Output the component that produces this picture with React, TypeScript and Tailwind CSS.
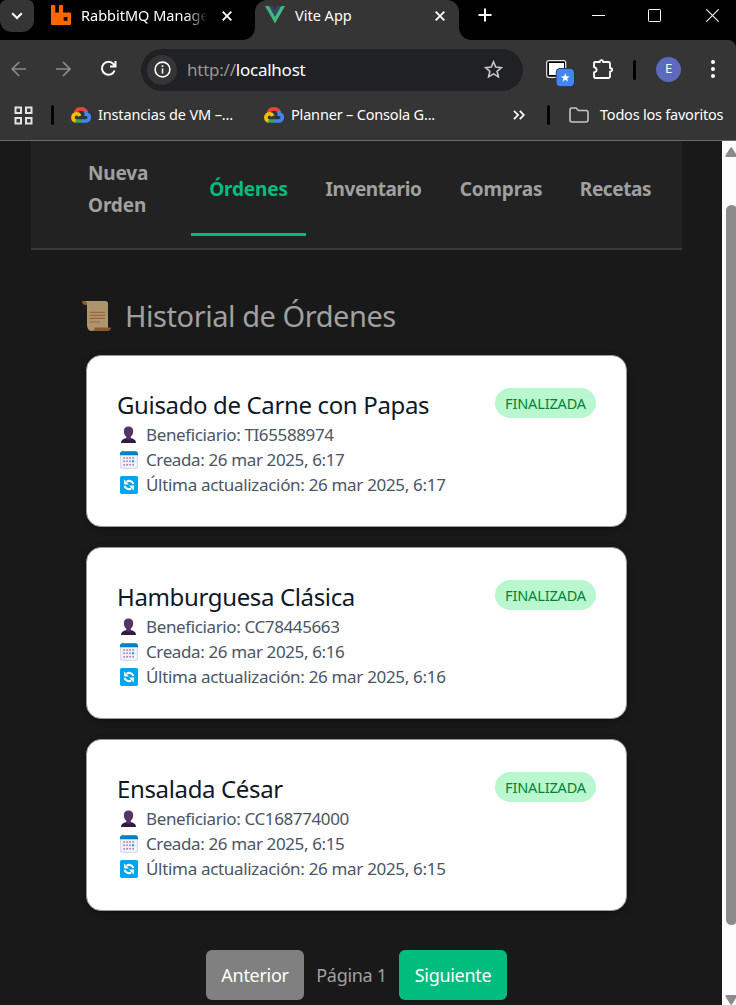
import React from 'react';

const CloudLogo = () => (
  <svg width="20" height="17" viewBox="0 0 20 17" fill="none" strokeWidth="3.6" className="shrink-0">
    <path d="M4.2 6.2C5.2 3.4 7.4 1.9 10 1.9c2.400 0 4.300 1.200 5.300 3.300" stroke="#ea4335" />
    <path d="M14.400 4.200c.8 1 .9 1.900.9 3 1.900.1 3 1.400 3 3.300 0 2-1.500 3.500-3.500 3.500H10" stroke="#4285f4" />
    <path d="M10.300 14H5.500c-.8 0-1.500-.2-2.100-.6" stroke="#34a853" />
    <path d="M4.400 14.100C2.700 13.300 1.900 12.200 1.900 10.400c0-2.100 1.500-3.700 3.600-3.700 1.700 0 2.700.8 3.300 2.300" stroke="#fbbc05" />
  </svg>
);

const Person = () => (
  <svg width="18" height="18" viewBox="0 0 18 18" className="shrink-0">
    <path d="M1 17c0-3 2-4.300 5-4.800h5c3 .5 5 1.800 5 4.800z" fill="#321b41" />
    <path d="M6.300 10h4.400v3c-1 1.300-3.400 1.300-4.400 0z" fill="#4b2d5e" />
    <path d="M8.500.6c3 0 4.700 1.800 4.700 4.500 0 3.200-1.900 6.600-4.700 6.600S3.800 8.300 3.800 5.100C3.800 2.400 5.500.6 8.500.6z" fill="#533566" />
  </svg>
);

const Calendar = () => (
  <svg width="18" height="18" viewBox="0 0 18 18" className="shrink-0">
    <rect x=".4" y=".4" width="17.200" height="17.200" rx="2.500" fill="#f3eef8" stroke="#d3c9da" strokeWidth=".8" />
    <path d="M0 4.200V2.800A2.600 2.600 0 0 1 2.600.2h12.800A2.600 2.600 0 0 1 18 2.800v1.400z" fill="#0082c8" />
    <g fill="#93869f">
      <path d="M6.300 6.200h1.600v1.600H6.300zM9.300 6.200h1.600v1.600H9.300zM12.300 6.200h1.600v1.600h-1.600zM3.300 9.500h1.600v1.600H3.300zM6.300 9.500h1.600v1.600H6.300zM9.300 9.500h1.600v1.600H9.300zM3.300 12.900h1.600v1.600H3.300zM6.300 12.900h1.600v1.600H6.300zM9.300 12.900h1.600v1.600H9.300zM12.300 12.900h1.600v1.600h-1.600z" />
      <path d="M3.300 6.200h1.600v1.600H3.300z" />
    </g>
    <path d="M12.100 9.300H14v2h-1.900z" fill="#0094e0" />
  </svg>
);

const Refresh = () => (
  <svg width="18" height="18" viewBox="0 0 18 18" className="shrink-0">
    <rect width="18" height="18" rx="1.800" fill="#00a6ed" />
    <path d="M13.300 8.200C12.900 5.200 9.300 3.900 6.700 5.700M4.700 9.800c.4 3 4 4.300 6.600 2.500" fill="none" stroke="#fff" strokeWidth="2.100" />
    <path d="M4 3.400v5h5zM14 14.600v-5H9z" fill="#fff" />
  </svg>
);

const Scroll = () => (
  <svg width="31" height="32" viewBox="0 0 31 32" className="shrink-0">
    <path d="M1 1h6v4H4.500C2.500 5 1 3.400 1 1z" fill="#8f5a2b" />
    <path d="M4 1h20.500C26 1 27 2 27 3.500V28H10c-2.500 0-4-1.500-4-4V4.500C6 2.500 5.500 1.500 4 1z" fill="#ad956f" />
    <path d="M6 24c0 4 1.500 7 4.500 7h14l2-3H13" fill="#ad956f" />
    <path d="M13.500 27.500H30c0 2-1.500 3.500-3.500 3.500H10.500c2 0 3-1 3-3.500z" fill="#8f5a2b" />
    <path d="M9 12.400h15M9 15.400h15M9 18.400h15M9 22h10" stroke="#97683c" strokeWidth="1.200" />
  </svg>
);

const orders = [
  { name: 'Guisado de Carne con Papas', id: 'TI65588974', time: '26 mar 2025, 6:17' },
  { name: 'Hamburguesa Clásica', id: 'CC78445663', time: '26 mar 2025, 6:16' },
  { name: 'Ensalada César', id: 'CC168774000', time: '26 mar 2025, 6:15' },
];

function OrderCard({ name, id, time }: { name: string; id: string; time: string }) {
  return (
    <article className="flex h-[172px] items-start justify-between rounded-[15px] border border-[#999] bg-white p-[30px] text-[#4a5565] shadow-[0_2px_6px_rgba(0,0,0,0.3)]">
      <div className="whitespace-nowrap text-[17px] leading-[25px] tracking-[-0.38px]">
        <h2 className="h-[36px] text-[24px] leading-[37px] tracking-[-0.36px] text-[#101828]">{name}</h2>
        <p className="flex items-center gap-[8px] pl-[3px]"><Person /><span>Beneficiario: {id}</span></p>
        <p className="flex items-center gap-[8px] pl-[3px]"><Calendar /><span>Creada: {time}</span></p>
        <p className="flex items-center gap-[8px] pl-[3px] tracking-[-0.32px]"><Refresh /><span>Última actualización: {time}</span></p>
      </div>
      <span className="mt-[2px] flex h-[30px] w-[101px] items-center justify-center rounded-full bg-[#b9f8cf] pt-px text-[14.500px] tracking-[-0.15px] text-[#008236]">FINALIZADA</span>
    </article>
  );
}

function TabStrip() {
  return (
    <div className="flex h-[40px] bg-black text-[14.500px] text-white">
      <div className="flex h-[32px] w-[34px] items-center justify-center rounded-b-[12px] rounded-t-[6px] bg-[#353535]">
        <svg width="12" height="8" viewBox="0 0 12 8" fill="none" stroke="#fff" strokeWidth="2"><path d="M1.200 1.200L6 6l4.800-4.800" /></svg>
      </div>
      <div className="flex h-[31px] w-[208px] items-center pl-[17px]">
        <svg width="20" height="20" viewBox="0 0 20 20" fill="#f60" className="mb-px shrink-0">
          <path fillRule="evenodd" d="M.8 0h2.700c.5 0 .8.300.8.800V7.500h3.600V.8c0-.5.3-.8.8-.8h2.500c.5 0 .8.300.8.800V7.500h7.200c.5 0 .8.300.8.800v10.900c0 .5-.3.800-.8.800H.8c-.5 0-.8-.3-.8-.8V.8C0 .3.300 0 .8 0zm11.900 12v3.700h3.700V12z" />
        </svg>
        <span className="ml-[10px] w-[127px] shrink-0 overflow-hidden whitespace-nowrap [mask-image:linear-gradient(to_right,black_82%,transparent)]">RabbitMQ Manage</span>
        <svg width="10" height="10" viewBox="0 0 10 10" stroke="#fff" strokeWidth="1.900" className="ml-[14px] shrink-0"><path d="M.7.7l8.600 8.600M9.300.7L.7 9.300" /></svg>
      </div>
      <svg width="13" height="40" viewBox="0 0 13 40" className="shrink-0"><path d="M13 0v27c0 7-5 13-13 13h13z" fill="#353535" /></svg>
      <div className="flex h-[40px] w-[204px] items-center rounded-t-[12px] bg-[#353535] pb-[9px] pl-[10px]">
        <svg width="20" height="18" viewBox="0 0 20 18" className="mb-px shrink-0"><path d="M0 0h4l6 10.500L16 0h4L10 17.500z" fill="#41b883" /><path d="M4 0h3.700L10 4l2.300-4H16l-6 10.500z" fill="#35495e" /></svg>
        <span className="ml-[10px] w-[130px]">Vite App</span>
        <svg width="10" height="10" viewBox="0 0 10 10" stroke="#fff" strokeWidth="1.900" className="ml-[10px] shrink-0"><path d="M.7.7l8.600 8.600M9.300.7L.7 9.300" /></svg>
      </div>
      <svg width="13" height="40" viewBox="0 0 13 40" className="shrink-0"><path d="M0 0v27c0 7 5 13 13 13H0z" fill="#353535" /></svg>
      <svg width="14" height="30" viewBox="0 0 14 30" stroke="#fff" strokeWidth="2" className="ml-[6px] shrink-0"><path d="M.5 15h13M7 8.500v13" /></svg>
      <svg width="13" height="31" viewBox="0 0 13 31" stroke="#fff" className="ml-[100px] shrink-0"><path d="M0 15.500h13" /></svg>
      <svg width="13" height="31" viewBox="0 0 13 31" fill="none" stroke="#fff" className="ml-[43px] shrink-0"><rect x=".5" y="9.500" width="12" height="12" rx=".8" /></svg>
      <svg width="13" height="31" viewBox="0 0 13 31" stroke="#fff" strokeWidth="1.200" className="ml-[45px] shrink-0"><path d="M.3 9.300l12.400 12.400M12.700 9.300L.3 21.700" /></svg>
    </div>
  );
}

function Toolbar() {
  return (
    <div className="bg-black">
      <div className="flex h-[59px] items-center rounded-tr-[8px] bg-[#353535] pl-[11px]">
        <svg width="16" height="16" viewBox="0 0 16 16" fill="none" stroke="#8b8b8b" strokeWidth="1.700" className="mb-[2px]"><path d="M15 8H1.200M8.200 1L1.200 8l7 7" /></svg>
        <svg width="16" height="16" viewBox="0 0 16 16" fill="none" stroke="#8b8b8b" strokeWidth="1.700" className="mb-[2px] ml-[28px]"><path d="M1 8h14M8 1l7 7-7 7" /></svg>
        <svg width="17" height="17" viewBox="0 0 17 17" fill="none" stroke="#fff" strokeWidth="2" className="mb-[2px] ml-[29px]"><path d="M14.600 10.500A6.500 6.500 0 1 1 13.500 4.200L15 5.800M15.500 1v5.500H10" /></svg>
        <div className="ml-[24px] flex h-[42px] w-[382px] items-center rounded-full bg-[#202124] pl-[6px] pr-[20px]">
          <div className="flex size-[30px] items-center justify-center rounded-full bg-[#353535]">
            <svg width="17" height="17" viewBox="0 0 17 17" fill="none" stroke="#fff" strokeWidth="1.600"><circle cx="8.500" cy="8.500" r="7.400" /><path d="M8.500 7.500v5M8.500 4.300v1.800" /></svg>
          </div>
          <span className="ml-[10px] text-[17px] tracking-[-0.24px] text-white"><span className="text-[#969696]">http://</span>localhost</span>
          <svg width="19" height="19" viewBox="0 0 19 19" fill="none" stroke="#c7c7c7" strokeWidth="1.600" className="mb-px ml-auto"><path d="M9.500 1.800l2.200 5.300 5.700.5-4.300 3.700 1.300 5.600-4.900-3-4.900 3 1.300-5.600-4.300-3.700 5.700-.5z" /></svg>
        </div>
        <svg width="30" height="28" viewBox="0 0 30 28" className="ml-[22px] mt-[7px]">
          <rect x="1.700" y="1.700" width="19" height="16.600" rx="2" fill="#000" stroke="#e8e8e8" strokeWidth="1.200" />
          <path d="M4 4h15v6h-7v6H4z" fill="#fff" />
          <rect x="10.800" y="9" width="18.900" height="18.900" rx="4.500" fill="#2a2a2a" />
          <rect x="11.500" y="9.700" width="17.500" height="17.600" rx="4" fill="#4285f4" />
          <path d="M20.300 14.200l1.200 3 3.200.2-2.500 2 .8 3.100-2.700-1.700-2.700 1.700.8-3.100-2.500-2 3.200-.2z" fill="#fff" />
        </svg>
        <svg width="22" height="22" viewBox="0 0 22 22" fill="none" stroke="#fff" strokeWidth="1.800" className="mb-[2px] ml-[17px]">
          <path d="M3 4h4.700c.2-2.600 3.300-2.600 3.500 0H16.500q1.500 0 1.500 1.500V10c2.800.2 2.800 3.500 0 3.700V18.500q0 1.500-1.500 1.500H3.500Q2 20 2 18.500v-4c3.500-.7 3.500-4.700 0-5.400V5Q2 4 3 4z" />
        </svg>
        <div className="ml-[19px] h-[20px] w-[3px] rounded-full bg-black" />
        <div className="mb-px ml-[20px] flex size-[25px] items-center justify-center rounded-full bg-[#5c6bc0] text-[13px] text-white">E</div>
        <svg width="6" height="20" viewBox="0 0 6 20" fill="#fff" className="mb-px ml-[29px]"><circle cx="3" cy="3" r="2" /><circle cx="3" cy="10" r="2" /><circle cx="3" cy="17" r="2" /></svg>
      </div>
    </div>
  );
}

function Bookmarks() {
  return (
    <div className="flex h-[42px] items-center whitespace-nowrap border-b border-[#6b6b6b] bg-[#353535] pb-[9px] text-[14.500px] tracking-[-0.15px] text-white">
      <svg width="19" height="19" viewBox="0 0 19 19" fill="none" stroke="#e3e3e3" strokeWidth="2" className="ml-[14px]"><path d="M1.500 1.500H7V7H1.500zM12 1.500h5.500V7H12zM1.500 12H7v5.500H1.500zM12 12h5.500v5.500H12z" /></svg>
      <div className="ml-[18px] h-[20px] w-[3px] rounded-full bg-black" />
      <div className="ml-[17px] flex w-[193px] items-center gap-[7px]"><CloudLogo /><span>Instancias de VM –...</span></div>
      <div className="flex w-[249px] items-center gap-[7px]"><CloudLogo /><span className="tracking-[-0.18px]">Planner – Consola G...</span></div>
      <svg width="12" height="10" viewBox="0 0 12 10" fill="none" stroke="#fff" strokeWidth="1.800"><path d="M1 .8L5 5 1 9.200M6.800.8l4 4.200-4 4.200" /></svg>
      <div className="ml-[22px] h-[20px] w-[3px] rounded-full bg-black" />
      <svg width="20" height="16" viewBox="0 0 20 16" fill="none" stroke="#c7c7c7" strokeWidth="1.600" className="ml-[19px]"><path d="M1 13V3q0-2 2-2h4l2.500 2.500H17q2 0 2 2V13q0 2-2 2H3q-2 0-2-2z" /></svg>
      <span className="ml-[11px] tracking-[-0.22px]">Todos los favoritos</span>
    </div>
  );
}

export default function App() {
  return (
    <div className="flex h-[1005px] w-[736px] flex-col overflow-hidden bg-[#191919] font-['Noto_Sans',sans-serif]">
      <header>
        <TabStrip />
        <Toolbar />
        <Bookmarks />
      </header>
      <div className="flex min-h-0 flex-1">
        <main className="w-[722px] text-[#a0a0a0]">
          <nav className="ml-[31px] flex h-[109px] w-[651px] border-b-2 border-[#3a3a3a] bg-[#222] pl-[38px] text-[19px] font-bold leading-[32px] tracking-[-0.15px]">
            <a className="flex h-[95px] w-[122px] items-center border-b-3 border-transparent pl-[19px] pt-[4px]"><span className="w-[70px]">Nueva Orden</span></a>
            <a className="flex h-[95px] w-[115px] items-center justify-center border-b-3 border-[#00bd7e] pt-[4px] text-[#00bd7e]">Órdenes</a>
            <a className="flex h-[95px] w-[135px] items-center justify-center pt-[1px] tracking-[-0.42px]">Inventario</a>
            <a className="flex h-[95px] w-[120px] items-center justify-center pt-[1px]">Compras</a>
            <a className="flex h-[95px] w-[109px] items-center justify-center pt-[1px] tracking-[-0.4px]">Recetas</a>
          </nav>
          <h1 className="ml-[81px] mt-[46px] flex h-[40px] items-center gap-[13px] whitespace-nowrap text-[29px] leading-[40px] tracking-[-0.45px]"><Scroll /><span>Historial de Órdenes</span></h1>
          <div className="ml-[86px] mt-[19px] flex w-[541px] flex-col gap-[20px]">
            {orders.map((o) => <OrderCard key={o.id} {...o} />)}
          </div>
          <div className="ml-[206px] mt-[39px] flex h-[50px] text-[18px] tracking-[-0.3px]">
            <button className="w-[98px] rounded-[6px] bg-[#808080] text-white">Anterior</button>
            <span className="flex w-[95px] items-center justify-center">Página 1</span>
            <button className="w-[108px] rounded-[6px] bg-[#00bd7e] text-white">Siguiente</button>
          </div>
        </main>
        <aside className="flex w-[14px] flex-col overflow-hidden bg-[#fcfcfc] pl-[3px]">
          <svg width="13" height="10" viewBox="0 0 13 10" fill="#8b8b8b" className="mt-[6px] shrink-0"><path d="M5.300.8q.9-1.200 1.800 0l4.700 7.400q.8 1.800-.8 1.800H1.500Q0 10 .6 8.200z" /></svg>
          <div className="ml-[1px] mt-[48px] h-[720px] w-[11px] shrink-0 rounded-full bg-[#8b8b8b]" />
          <svg width="13" height="10" viewBox="0 0 13 10" fill="#8b8b8b" className="mt-[70px] shrink-0"><path d="M5.300 9.200q.9 1.200 1.800 0l4.700-7.400Q12.600 0 11 0H1.500Q0 0 .6 1.800z" /></svg>
        </aside>
      </div>
    </div>
  );
}
